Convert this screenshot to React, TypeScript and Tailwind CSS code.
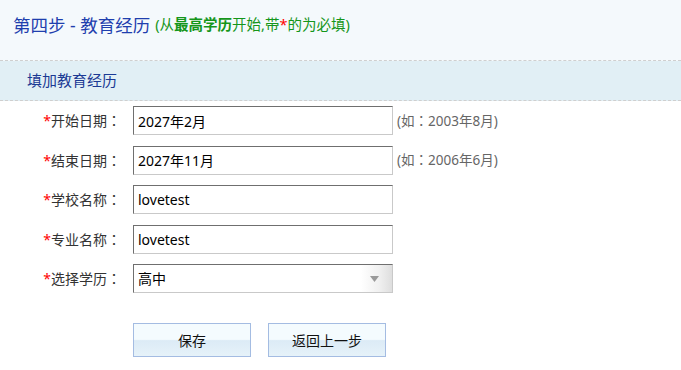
// Step 4 of the resume wizard: education history form.
const font = "font-['Noto_Sans','Noto_Sans_CJK_SC',sans-serif]";

const inputCls =
  'h-[29px] w-[260px] border border-t-[#6f6f6f] border-l-[#6f6f6f] border-r-[#c9c9c9] border-b-[#c9c9c9] bg-white px-[4px] text-[14px] text-black outline-none';

// full-width colon, centred in its box like the original font draws it
function Colon() {
  return <span className="font-['Noto_Sans_CJK_TC',sans-serif]">：</span>;
}

function Label({ text }: { text: string }) {
  return (
    <div className="w-[121px] text-right text-[14px] text-[#333]">
      <span className="text-[#f00]">*</span>
      {text}
      <Colon />
    </div>
  );
}

function Row({ label, children, hint }: { label: string; children: React.ReactNode; hint?: string }) {
  return (
    <div className="flex items-center">
      <Label text={label} />
      <div className="ml-[12px]">{children}</div>
      {hint && (
        <span className="ml-[4px] text-[13.5px] text-[#666]">
          (如<Colon />
          {hint})
        </span>
      )}
    </div>
  );
}

function Button({ children }: { children: React.ReactNode }) {
  return (
    <button className="h-[34px] w-[118px] border border-[#a4bce2] bg-[linear-gradient(to_bottom,#f4fbfe_0%,#f4fbfe_48%,#dcebf6_52%,#e6f2f9_100%)] text-[14px] text-[#111]">
      {children}
    </button>
  );
}

export default function App() {
  return (
    <div className={`h-[370px] w-[681px] overflow-hidden bg-white ${font}`}>
      <div className="flex h-[61px] items-center border-b border-dashed border-[#cfcfcf] bg-[#f4f9fc] pl-[13px] pb-[10px]">
        <span className="text-[17.5px] text-[#1f3fae]">第四步 - 教育经历</span>
        <span className="ml-[5px] text-[14.5px] text-[#15961a]">
          (从<b>最高学历</b>开始,带<span className="text-[#f00]">*</span>的为必填)
        </span>
      </div>
      <div className="flex h-[40px] items-center border-b border-dashed border-[#cfcfcf] bg-[#e1eff5] pl-[27px] text-[15px] text-[#1b3a94]">
        填加教育经历
      </div>

      <div className="flex flex-col gap-y-[10.5px] pt-[5px]">
        <Row label="开始日期" hint="2003年8月">
          <input className={inputCls} defaultValue="2027年2月" />
        </Row>
        <Row label="结束日期" hint="2006年6月">
          <input className={inputCls} defaultValue="2027年11月" />
        </Row>
        <Row label="学校名称">
          <input className={inputCls} defaultValue="lovetest" />
        </Row>
        <Row label="专业名称">
          <input className={inputCls} defaultValue="lovetest" />
        </Row>
        <Row label="选择学历">
          <div className="relative flex h-[29px] w-[260px] items-center border border-t-[#6f6f6f] border-l-[#6f6f6f] border-r-[#c9c9c9] border-b-[#c9c9c9] bg-[linear-gradient(to_right,#ffffff_0%,#ffffff_88%,#f0f0f0_95%,#dedede_100%)] px-[4px] text-[14px] text-black">
            高中
            <svg className="absolute right-[13px] top-[11px]" width="9" height="6" viewBox="0 0 9 6">
              <path d="M0 0H9L4.5 6Z" fill="#9a9a9a" />
            </svg>
          </div>
        </Row>
      </div>

      <div className="mt-[30px] flex gap-[17px] pl-[133px]">
        <Button>保存</Button>
        <Button>返回上一步</Button>
      </div>
    </div>
  );
}
